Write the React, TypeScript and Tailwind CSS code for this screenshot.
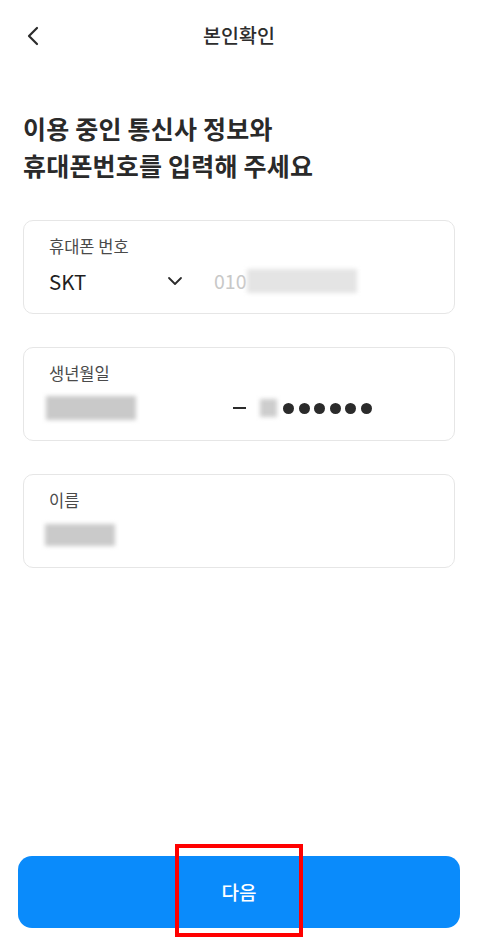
import React from "react";

const font = { fontFamily: '"Noto Sans CJK KR", "Noto Sans", sans-serif' };

const Blur = ({ className }: { className: string }) => (
  <div className={`blur-[2px] ${className}`} />
);

const Card = ({ label, children }: { label: string; children: React.ReactNode }) => (
  <div className="h-[94px] rounded-[10px] border border-[#e6e6e6] px-[25px] pt-[11px]">
    <div className="text-[16.5px] leading-[28px] text-[#4a4a4a]">{label}</div>
    <div className="mt-[3px] flex h-[36px] items-center">{children}</div>
  </div>
);

export default function App() {
  return (
    <div style={font} className="relative flex h-[942px] w-[478px] flex-col bg-white">
      <div className="relative flex h-[70px] items-center justify-center">
        <svg className="absolute left-[26px] top-[26px]" width="16" height="20" viewBox="0 0 16 20" fill="none">
          <path d="M11 2 L3 10 L11 18" stroke="#2b2b2b" strokeWidth="2.2" strokeLinecap="round" strokeLinejoin="round" />
        </svg>
        <span className="text-[19.5px] font-medium text-[#2d2d2d]">본인확인</span>
      </div>

      <h1 className="mt-[40px] px-[23px] text-[25px] font-bold leading-[37px] tracking-[0.2px] text-[#2a2a2a]">
        이용 중인 통신사 정보와
        <br />
        휴대폰번호를 입력해 주세요
      </h1>

      <div className="mt-[36px] flex flex-col gap-[33px] px-[23px]">
        <Card label="휴대폰 번호">
          <span className="w-[118px] text-[20.5px] text-[#1f1f1f]">SKT</span>
          <svg width="16" height="10" viewBox="0 0 16 10" fill="none">
            <path d="M2 2 L8 8 L14 2" stroke="#2b2b2b" strokeWidth="1.8" strokeLinecap="round" strokeLinejoin="round" />
          </svg>
          <span className="ml-[31px] text-[19.5px] text-[#c8c8c8]">010</span>
          <Blur className="ml-[1px] h-[24px] w-[110px] bg-[#e4e4e4]" />
        </Card>
        <Card label="생년월일">
          <Blur className="-ml-[3px] h-[24px] w-[90px] bg-[#c9c9c9]" />
          <div className="ml-[97px] h-[2px] w-[13px] bg-[#2b2b2b]" />
          <Blur className="ml-[14px] h-[18px] w-[17px] bg-[#cdcdcd]" />
          <div className="ml-[6px] flex gap-[4.5px]">
            {[0, 1, 2, 3, 4, 5].map((i) => (
              <div key={i} className="h-[11px] w-[11px] rounded-full bg-[#2b2b2b]" />
            ))}
          </div>
        </Card>
        <Card label="이름">
          <Blur className="-ml-[4px] h-[22px] w-[70px] bg-[#cacaca]" />
        </Card>
      </div>

      <div className="flex-1" />

      <div className="px-[18px] pb-[14px]">
        <button className="flex h-[72px] w-full items-center justify-center rounded-[14px] bg-[#0a8bfb] text-[19px] font-medium text-white">
          다음
        </button>
      </div>

      <div className="pointer-events-none absolute left-[175px] top-[844px] h-[93px] w-[128px] border-[4px] border-[#ff0000]" />
    </div>
  );
}
